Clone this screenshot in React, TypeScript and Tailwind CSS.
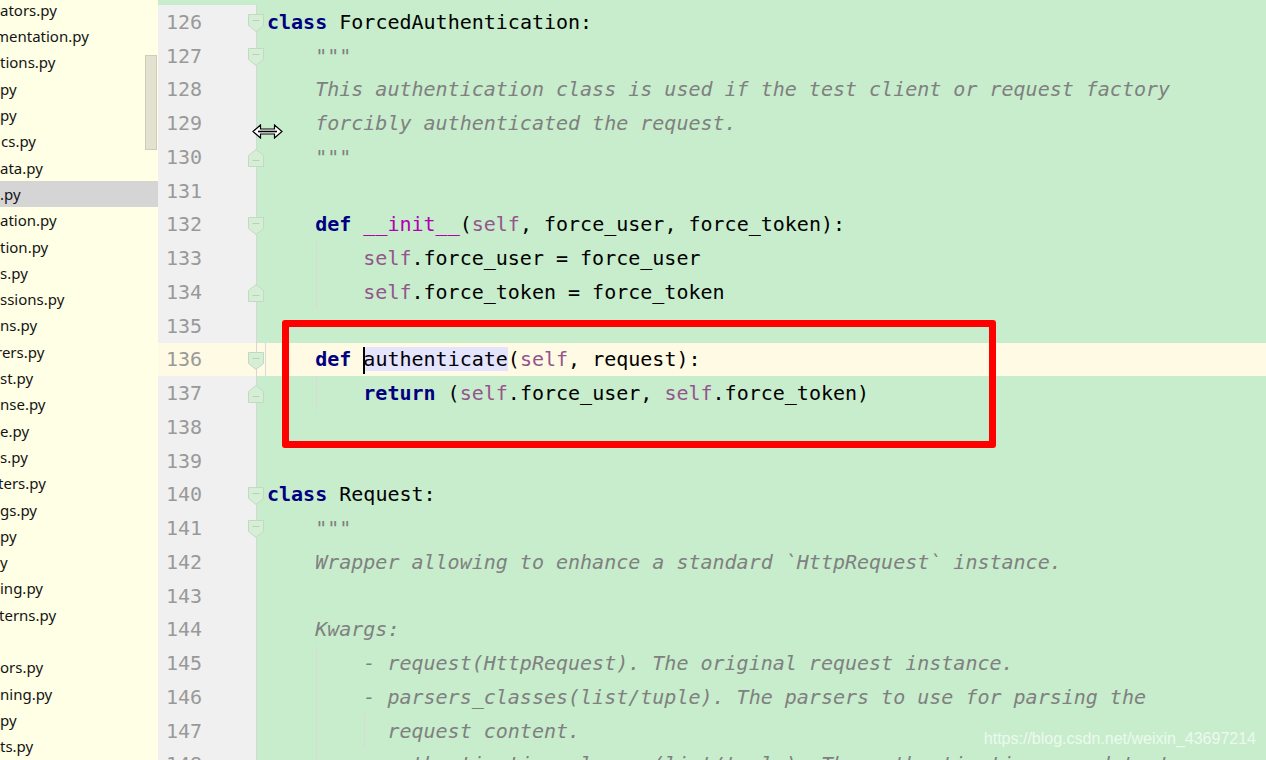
import React from "react";

type Kind = "plain" | "kw" | "self" | "magic" | "doc" | "hl" | "caret";
type Tok = [string, Kind];

interface Line {
  n: number;
  toks: Tok[];
  fold?: "down" | "up";
  guides?: number[];
  current?: boolean;
}

const files: { name: string; shift?: string }[] = [
  { name: "ators.py" },
  { name: "mentation.py", shift: "-ml-[5px]" },
  { name: "tions.py" },
  { name: "py" },
  { name: "py" },
  { name: "cs.py", shift: "ml-[1px]" },
  { name: "ata.py" },
  { name: ".py" },
  { name: "ation.py" },
  { name: "tion.py" },
  { name: "s.py" },
  { name: "ssions.py" },
  { name: "ns.py" },
  { name: "rers.py", shift: "-ml-[4px]" },
  { name: "st.py" },
  { name: "nse.py" },
  { name: "e.py" },
  { name: "s.py" },
  { name: "ters.py", shift: "-ml-[2px]" },
  { name: "gs.py" },
  { name: "py" },
  { name: "y" },
  { name: "ing.py" },
  { name: "terns.py", shift: "-ml-[1px]" },
  { name: "" },
  { name: "ors.py" },
  { name: "ning.py" },
  { name: "py" },
  { name: "ts.py" },
];

const lines: Line[] = [
  { n: 126, fold: "down", toks: [["class", "kw"], [" ForcedAuthentication:", "plain"]] },
  { n: 127, fold: "down", toks: [['    """', "doc"]] },
  { n: 128, toks: [["    This authentication class is used if the test client or request factory", "doc"]] },
  { n: 129, toks: [["    forcibly authenticated the request.", "doc"]] },
  { n: 130, fold: "up", toks: [['    """', "doc"]] },
  { n: 131, toks: [] },
  {
    n: 132,
    fold: "down",
    toks: [
      ["    ", "plain"],
      ["def", "kw"],
      [" ", "plain"],
      ["__init__", "magic"],
      ["(", "plain"],
      ["self", "self"],
      [", force_user, force_token):", "plain"],
    ],
  },
  { n: 133, guides: [158], toks: [["        ", "plain"], ["self", "self"], [".force_user = force_user", "plain"]] },
  { n: 134, fold: "up", guides: [158], toks: [["        ", "plain"], ["self", "self"], [".force_token = force_token", "plain"]] },
  { n: 135, toks: [] },
  {
    n: 136,
    fold: "down",
    current: true,
    guides: [107],
    toks: [
      ["    ", "plain"],
      ["def", "kw"],
      [" ", "plain"],
      ["", "caret"],
      ["authenticate", "hl"],
      ["(", "plain"],
      ["self", "self"],
      [", request):", "plain"],
    ],
  },
  {
    n: 137,
    fold: "up",
    guides: [158],
    toks: [
      ["        ", "plain"],
      ["return", "kw"],
      [" (", "plain"],
      ["self", "self"],
      [".force_user, ", "plain"],
      ["self", "self"],
      [".force_token)", "plain"],
    ],
  },
  { n: 138, toks: [] },
  { n: 139, toks: [] },
  { n: 140, fold: "down", toks: [["class", "kw"], [" Request:", "plain"]] },
  { n: 141, fold: "down", toks: [['    """', "doc"]] },
  { n: 142, toks: [["    Wrapper allowing to enhance a standard `HttpRequest` instance.", "doc"]] },
  { n: 143, toks: [] },
  { n: 144, toks: [["    Kwargs:", "doc"]] },
  { n: 145, guides: [158], toks: [["        - request(HttpRequest). The original request instance.", "doc"]] },
  { n: 146, guides: [158], toks: [["        - parsers_classes(list/tuple). The parsers to use for parsing the", "doc"]] },
  { n: 147, guides: [158, 206], toks: [["          request content.", "doc"]] },
  { n: 148, guides: [158], toks: [["        - authentication_classes(list/tuple). The authentications used to try", "doc"]] },
];

const tokClass: Record<Kind, string> = {
  plain: "text-black",
  kw: "text-[#000080] font-bold",
  self: "text-[#94558D]",
  magic: "text-[#B200B2]",
  doc: "text-[#808080] italic",
  hl: "text-black bg-[#E4E4FF]",
  caret: "",
};

function FoldMark({ dir }: { dir: "down" | "up" }) {
  return (
    <svg width="16" height="18" viewBox="0 0 16 18" className="absolute left-[90px] top-[9px]">
      {dir === "down" ? (
        <>
          <path d="M0.5 0.5 H15.5 V11.5 L8 17.5 L0.5 11.5 Z" fill="#D6EDD6" stroke="#BFDCBF" />
          <path d="M4.5 6.5 H11.5" stroke="#B5D3B5" />
        </>
      ) : (
        <>
          <path d="M0.5 17.5 H15.5 V6.5 L8 0.5 L0.5 6.5 Z" fill="#D6EDD6" stroke="#BFDCBF" />
          <path d="M4.5 11.5 H11.5" stroke="#B5D3B5" />
        </>
      )}
    </svg>
  );
}

function ResizeCursor() {
  return (
    <svg width="31" height="15" viewBox="0 0 31 15" className="absolute left-[94px] top-[124px]">
      <path
        d="M1 7.5 L8.5 1 V5 H22.5 V1 L30 7.5 L22.5 14 V10 H8.5 V14 Z"
        fill="#ffffff"
        stroke="#000000"
        strokeWidth="1.2"
      />
      <path d="M6 7.5 H25" stroke="#000000" strokeWidth="1.6" />
    </svg>
  );
}

export default function App() {
  return (
    <div className="flex h-[760px] w-[1266px] overflow-hidden bg-[#C7EDCC]">
      {/* project tree */}
      <div className="relative w-[158px] shrink-0 overflow-hidden bg-[#FFFFE6]">
        <div className="-mt-[3px] flex flex-col" style={{ fontFamily: "'Noto Sans', 'Open Sans', sans-serif" }}>
          {files.map((f, i) => (
            <div
              key={i}
              className={`flex h-[26.3px] items-center whitespace-nowrap text-[15px] text-[#141414] ${i === 7 ? "bg-[#D5D5D5]" : ""}`}
            >
              <span className={f.shift ?? ""}>{f.name}</span>
            </div>
          ))}
        </div>
        <div className="absolute left-[145px] top-[55px] h-[95px] w-[12px] border border-[#CFCDB9] bg-[#E3E1CF]" />
      </div>

      {/* editor */}
      <div className="relative flex-1 overflow-hidden">
        <div className="flex flex-col pt-[5px]" style={{ fontFamily: "'DejaVu Sans Mono', 'Liberation Mono', monospace" }}>
          {lines.map((l) => (
            <div
              key={l.n}
              className={`relative flex h-[33.75px] items-center whitespace-pre text-[20px] ${l.current ? "bg-[#FFFAE3]" : ""}`}
            >
              <div
                className={`relative flex h-full w-[99px] shrink-0 items-center border-r border-[#D6D6D6] pl-[8px] text-[#999999] ${l.current ? "bg-[#FFFAE3]" : "bg-[#F0F0F0]"}`}
              >
                {l.n}
                {l.fold && <FoldMark dir={l.fold} />}
              </div>
              {(l.guides ?? []).map((g) => (
                <div key={g} className="absolute top-0 h-full w-px bg-[#D9D9D9]" style={{ left: g }} />
              ))}
              <div className="pl-[10px]">
                {l.toks.map(([t, k], j) =>
                  k === "caret" ? (
                    <span
                      key={j}
                      className="relative z-10 -mr-[2px] inline-block h-[27px] w-[2px] bg-black align-middle"
                    />
                  ) : (
                    <span key={j} className={tokClass[k]}>
                      {t}
                    </span>
                  )
                )}
              </div>
            </div>
          ))}
        </div>

        {/* red annotation box */}
        <div className="absolute left-[124px] top-[320px] h-[128px] w-[714px] rounded-[3px] border-[7px] border-[#FF0000]" />

        <ResizeCursor />

        <div
          className="absolute bottom-[9px] right-[10px] text-[16px] text-white/70"
          style={{ fontFamily: "'Liberation Sans', Arial, sans-serif" }}
        >
          https://blog.csdn.net/weixin_43697214
        </div>
      </div>
    </div>
  );
}
